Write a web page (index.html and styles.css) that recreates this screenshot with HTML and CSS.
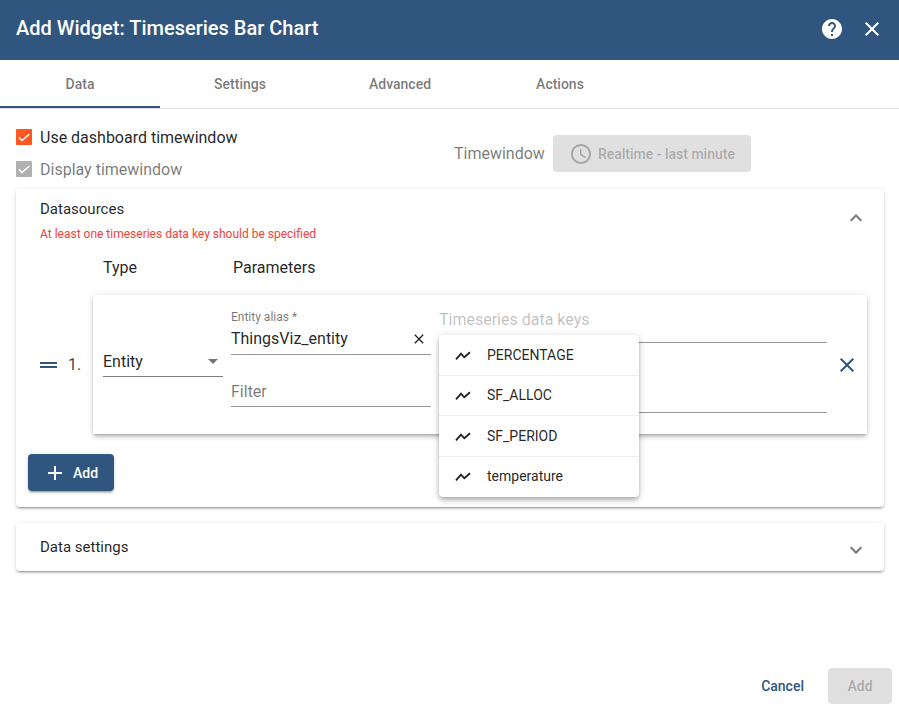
FILE: index.html
```html
<!DOCTYPE html>
<html lang="en">
<head>
<meta charset="utf-8">
<title>Add Widget</title>
<link rel="stylesheet" href="styles.css">
</head>
<body>
<div class="dialog">
  <header class="topbar">
    <h1 class="title">Add Widget: Timeseries Bar Chart</h1>
    <div class="top-actions">
      <svg class="icon24" viewBox="0 0 24 24"><path fill="#fff" d="M12 2C6.48 2 2 6.48 2 12s4.48 10 10 10 10-4.48 10-10S17.52 2 12 2zm1 17h-2v-2h2v2zm2.07-7.75l-.9.92C13.45 12.9 13 13.5 13 15h-2v-.5c0-1.1.45-2.1 1.17-2.83l1.24-1.26c.37-.36.59-.86.59-1.41 0-1.1-.9-2-2-2s-2 .9-2 2H8c0-2.21 1.79-4 4-4s4 1.79 4 4c0 .88-.36 1.68-.93 2.25z"/></svg>
      <svg class="icon24" viewBox="0 0 24 24"><path fill="#fff" d="M19 6.41L17.59 5 12 10.59 6.41 5 5 6.41 10.59 12 5 17.59 6.41 19 12 13.41 17.59 19 19 17.59 13.41 12z"/></svg>
    </div>
  </header>

  <nav class="tabs">
    <div class="tab tab-active">Data</div>
    <div class="tab">Settings</div>
    <div class="tab">Advanced</div>
    <div class="tab">Actions</div>
  </nav>

  <main class="content">
    <div class="options">
      <div class="checks">
        <label class="check">
          <span class="box box-on"><svg viewBox="0 0 16 16"><path fill="none" stroke="#fff" stroke-width="1.5" d="M2.8 8.3l3.2 3.2 7.2-6.3"/></svg></span>
          <span class="check-text">Use dashboard timewindow</span>
        </label>
        <label class="check check-muted">
          <span class="box box-off"><svg viewBox="0 0 16 16"><path fill="none" stroke="#fff" stroke-width="1.5" d="M2.8 8.3l3.2 3.2 7.2-6.3"/></svg></span>
          <span class="check-text">Display timewindow</span>
        </label>
      </div>
      <div class="timewindow">
        <span class="tw-label">Timewindow</span>
        <div class="tw-button">
          <svg class="icon24" viewBox="0 0 24 24"><path fill="#a6a6a6" d="M11.99 2C6.47 2 2 6.48 2 12s4.47 10 9.99 10C17.52 22 22 17.52 22 12S17.52 2 11.99 2zM12 20c-4.42 0-8-3.58-8-8s3.58-8 8-8 8 3.58 8 8-3.58 8-8 8zm.5-13H11v6l5.25 3.15.75-1.23-4.5-2.67z"/></svg>
          <span>Realtime - last minute</span>
        </div>
      </div>
    </div>

    <section class="panel panel-open">
      <div class="panel-head">
        <div>
          <div class="panel-title">Datasources</div>
          <div class="error">At least one timeseries data key should be specified</div>
        </div>
        <svg class="icon24 chevron" viewBox="0 0 24 24"><path fill="#757575" d="M12 8l-6 6 1.41 1.41L12 10.83l4.59 4.58L18 14z"/></svg>
      </div>
      <div class="columns">
        <span class="col-type">Type</span>
        <span>Parameters</span>
      </div>
      <div class="row">
        <div class="row-lead">
          <svg class="drag" viewBox="0 0 17 6"><path fill="#305680" d="M0 0h17v2H0zM0 4h17v2H0z"/></svg>
          <span class="row-num">1.</span>
        </div>
        <div class="row-card">
          <div class="field-type">
            <span>Entity</span>
            <span class="caret"></span>
          </div>
          <div class="params">
            <div class="field-alias">
              <span class="float-label">Entity alias *</span>
              <div class="alias-value">
                <span>ThingsViz_entity</span>
                <svg class="clear" viewBox="0 0 24 24"><path fill="#212121" d="M19 6.41L17.59 5 12 10.59 6.41 5 5 6.41 10.59 12 5 17.59 6.41 19 12 13.41 17.59 19 19 17.59 13.41 12z"/></svg>
              </div>
            </div>
            <div class="field-filter">Filter</div>
          </div>
          <div class="keys">
            <div class="field-keys">Timeseries data keys</div>
            <div class="field-keys2"></div>
            <ul class="menu">
              <li class="menu-item"><svg class="trend" viewBox="0 0 16 16"><path fill="none" stroke="#212121" stroke-width="1.8" d="M1 12.3l5-5.6 3.3 3.6L15 5.3"/></svg><span>PERCENTAGE</span></li>
              <li class="menu-item"><svg class="trend" viewBox="0 0 16 16"><path fill="none" stroke="#212121" stroke-width="1.8" d="M1 12.3l5-5.6 3.3 3.6L15 5.3"/></svg><span>SF_ALLOC</span></li>
              <li class="menu-item"><svg class="trend" viewBox="0 0 16 16"><path fill="none" stroke="#212121" stroke-width="1.8" d="M1 12.3l5-5.6 3.3 3.6L15 5.3"/></svg><span>SF_PERIOD</span></li>
              <li class="menu-item"><svg class="trend" viewBox="0 0 16 16"><path fill="none" stroke="#212121" stroke-width="1.8" d="M1 12.3l5-5.6 3.3 3.6L15 5.3"/></svg><span>temperature</span></li>
            </ul>
          </div>
        </div>
        <svg class="icon24 row-remove" viewBox="0 0 24 24"><path fill="#305680" d="M19 6.41L17.59 5 12 10.59 6.41 5 5 6.41 10.59 12 5 17.59 6.41 19 12 13.41 17.59 19 19 17.59 13.41 12z"/></svg>
      </div>
      <button class="add-source" type="button">
        <svg class="icon24" viewBox="0 0 24 24"><path fill="#fff" d="M19 13h-6v6h-2v-6H5v-2h6V5h2v6h6v2z"/></svg>
        <span>Add</span>
      </button>
    </section>

    <section class="panel panel-closed">
      <div class="panel-title">Data settings</div>
      <svg class="icon24 chevron" viewBox="0 0 24 24"><path fill="#757575" d="M16.59 8.59L12 13.17 7.41 8.59 6 10l6 6 6-6z"/></svg>
    </section>
  </main>

  <footer class="actions">
    <button class="btn-cancel" type="button">Cancel</button>
    <button class="btn-add" type="button">Add</button>
  </footer>
</div>
</body>
</html>
```
FILE: styles.css
```css
* { box-sizing: border-box; }
html, body { margin: 0; height: 100%; }
body {
  background: #fff;
  font-family: Roboto, "Liberation Sans", sans-serif;
  color: rgba(0, 0, 0, 0.87);
  overflow: hidden;
}
.dialog { display: flex; flex-direction: column; height: 706px; }
.icon24 { width: 24px; height: 24px; display: block; flex: none; }

.topbar {
  height: 60px; flex: none;
  background: #305680; color: #fff;
  display: flex; align-items: center; justify-content: space-between;
  padding: 0 15px 0 16px;
}
.title { margin: 0 0 4px; font-size: 20px; font-weight: 500; line-height: 56px; }
.top-actions { display: flex; gap: 16px; margin-bottom: 2px; }

.tabs { display: flex; height: 49px; flex: none; border-bottom: 1px solid #e0e0e0; }
.tab {
  width: 160px; height: 48px;
  display: flex; align-items: center; justify-content: center;
  font-size: 14px; font-weight: 500; color: rgba(0, 0, 0, 0.54);
}
.tab-active { border-bottom: 2px solid #305680; padding-top: 2px; }

.content { flex: 1; padding: 16px 15px 0 16px; }
.options { display: flex; height: 64px; }
.checks { width: 438px; display: flex; flex-direction: column; gap: 8px; }
.check { display: flex; align-items: center; gap: 8px; height: 24px; font-size: 16px; }
.check-muted { color: rgba(0, 0, 0, 0.54); }
.box { width: 16px; height: 16px; display: block; border-radius: 1px; }
.box svg { display: block; width: 16px; height: 16px; }
.box-on { background: #ff5722; }
.box-off { background: #b0b0b0; }

.timewindow { display: flex; align-items: center; gap: 8px; height: 37px; margin-top: 10px; }
.tw-label { font-size: 16px; color: rgba(0, 0, 0, 0.54); }
.tw-button {
  width: 198px; height: 37px; background: #e0e0e0; border-radius: 4px;
  display: flex; align-items: center; gap: 5px; padding-left: 16px;
  font-size: 14px; font-weight: 500; color: rgba(0, 0, 0, 0.26);
}

.panel {
  width: 868px; background: #fff; border-radius: 4px;
  box-shadow: 0 3px 1px -2px rgba(0,0,0,.2), 0 2px 2px 0 rgba(0,0,0,.14), 0 1px 5px 0 rgba(0,0,0,.12);
}
.panel-open { height: 318px; }
.panel-head { display: flex; justify-content: space-between; padding: 11px 16px 0 24px; }
.panel-title { font-size: 15px; font-weight: 400; line-height: 18px; }
.error { font-size: 12px; line-height: 14px; margin-top: 9px; color: #f44336; }
.chevron { margin-top: 6px; }
.columns { display: flex; font-size: 16px; padding-left: 87px; margin-top: 17px; line-height: 19px; }
.col-type { width: 130px; }

.row { display: flex; align-items: center; margin-top: 18px; }
.row-lead { width: 77px; display: flex; align-items: center; padding-left: 24px; gap: 11px; font-size: 16px; color: rgba(0,0,0,.76); }
.drag { width: 17px; height: 6px; display: block; }
.row-card {
  width: 774px; height: 139px; background: #fff;
  display: flex; padding: 0 40px 0 10px;
  box-shadow: 0 3px 3px -2px rgba(0,0,0,.2), 0 3px 4px 0 rgba(0,0,0,.14), 0 1px 8px 0 rgba(0,0,0,.12);
}
.row-remove { margin-left: -32px; position: relative; }

.field-type {
  width: 120px; height: 32px; margin-top: 50px; margin-right: 8px;
  border-bottom: 1px solid rgba(0,0,0,.5);
  display: flex; justify-content: space-between; align-items: center;
  font-size: 16px; padding-right: 5px; padding-top: 2px;
}
.caret { width: 0; height: 0; border-left: 5px solid transparent; border-right: 5px solid transparent; border-top: 5px solid #757575; }
.params { width: 200px; margin-right: 8px; }
.field-alias { height: 60px; padding-top: 16px; border-bottom: 1px solid rgba(0,0,0,.42); }
.float-label { display: block; font-size: 12px; line-height: 12px; color: rgba(0,0,0,.54); }
.alias-value { display: flex; justify-content: space-between; align-items: center; font-size: 16px; height: 24px; margin-top: 3px; }
.clear { width: 16px; height: 16px; display: block; margin-right: 4px; margin-top: 2px; }
.field-filter { height: 41px; margin-top: 11px; padding-top: 16px; line-height: 19px; font-size: 16px; color: rgba(0,0,0,.54); border-bottom: 1px solid rgba(0,0,0,.42); }

.keys { width: 388px; position: relative; }
.field-keys { height: 48px; padding-top: 15px; line-height: 19px; font-size: 16px; color: rgba(0,0,0,.26); border-bottom: 1px solid rgba(0,0,0,.42); }
.field-keys2 { height: 70px; border-bottom: 1px solid rgba(0,0,0,.42); }

.menu {
  position: absolute; left: 0; top: 40px; width: 200px; height: 162px;
  margin: 0; padding: 0; list-style: none; background: #fff; border-radius: 4px;
  box-shadow: 0 2px 4px -1px rgba(0,0,0,.2), 0 4px 5px 0 rgba(0,0,0,.14), 0 1px 10px 0 rgba(0,0,0,.12);
}
.menu-item {
  height: 41px; display: flex; align-items: center; gap: 16px; padding-left: 16px;
  font-size: 14px; border-bottom: 1px solid #eeeeee;
}
.menu-item:nth-child(even) { height: 40px; padding-bottom: 2px; }
.menu-item:last-child { border-bottom: 0; }
.trend { width: 16px; height: 16px; display: block; flex: none; }

.add-source {
  margin: 20px 0 0 12px; width: 86px; height: 37px; border: 0; border-radius: 4px;
  background: #305680; color: #fff; display: flex; align-items: center; gap: 6px; padding: 0 0 0 19px;
  font: 500 14px Roboto, sans-serif;
  box-shadow: 0 3px 1px -2px rgba(0,0,0,.2), 0 2px 2px 0 rgba(0,0,0,.14), 0 1px 5px 0 rgba(0,0,0,.12);
}
.add-source .icon24 { margin-left: -4px; }

.panel-closed { height: 48px; margin-top: 16px; display: flex; justify-content: space-between; align-items: center; padding: 0 16px 0 24px; }
.panel-closed .chevron { margin-top: 6px; }

.actions { flex: none; height: 36px; margin-bottom: 2px; display: flex; justify-content: flex-end; align-items: center; gap: 8px; padding-right: 7px; }
.btn-cancel, .btn-add { height: 36px; border: 0; border-radius: 4px; font: 500 14px Roboto, sans-serif; }
.btn-cancel { background: transparent; color: #305680; padding: 0 16px; }
.btn-add { width: 64px; background: #e0e0e0; color: rgba(0,0,0,.26); }
```
